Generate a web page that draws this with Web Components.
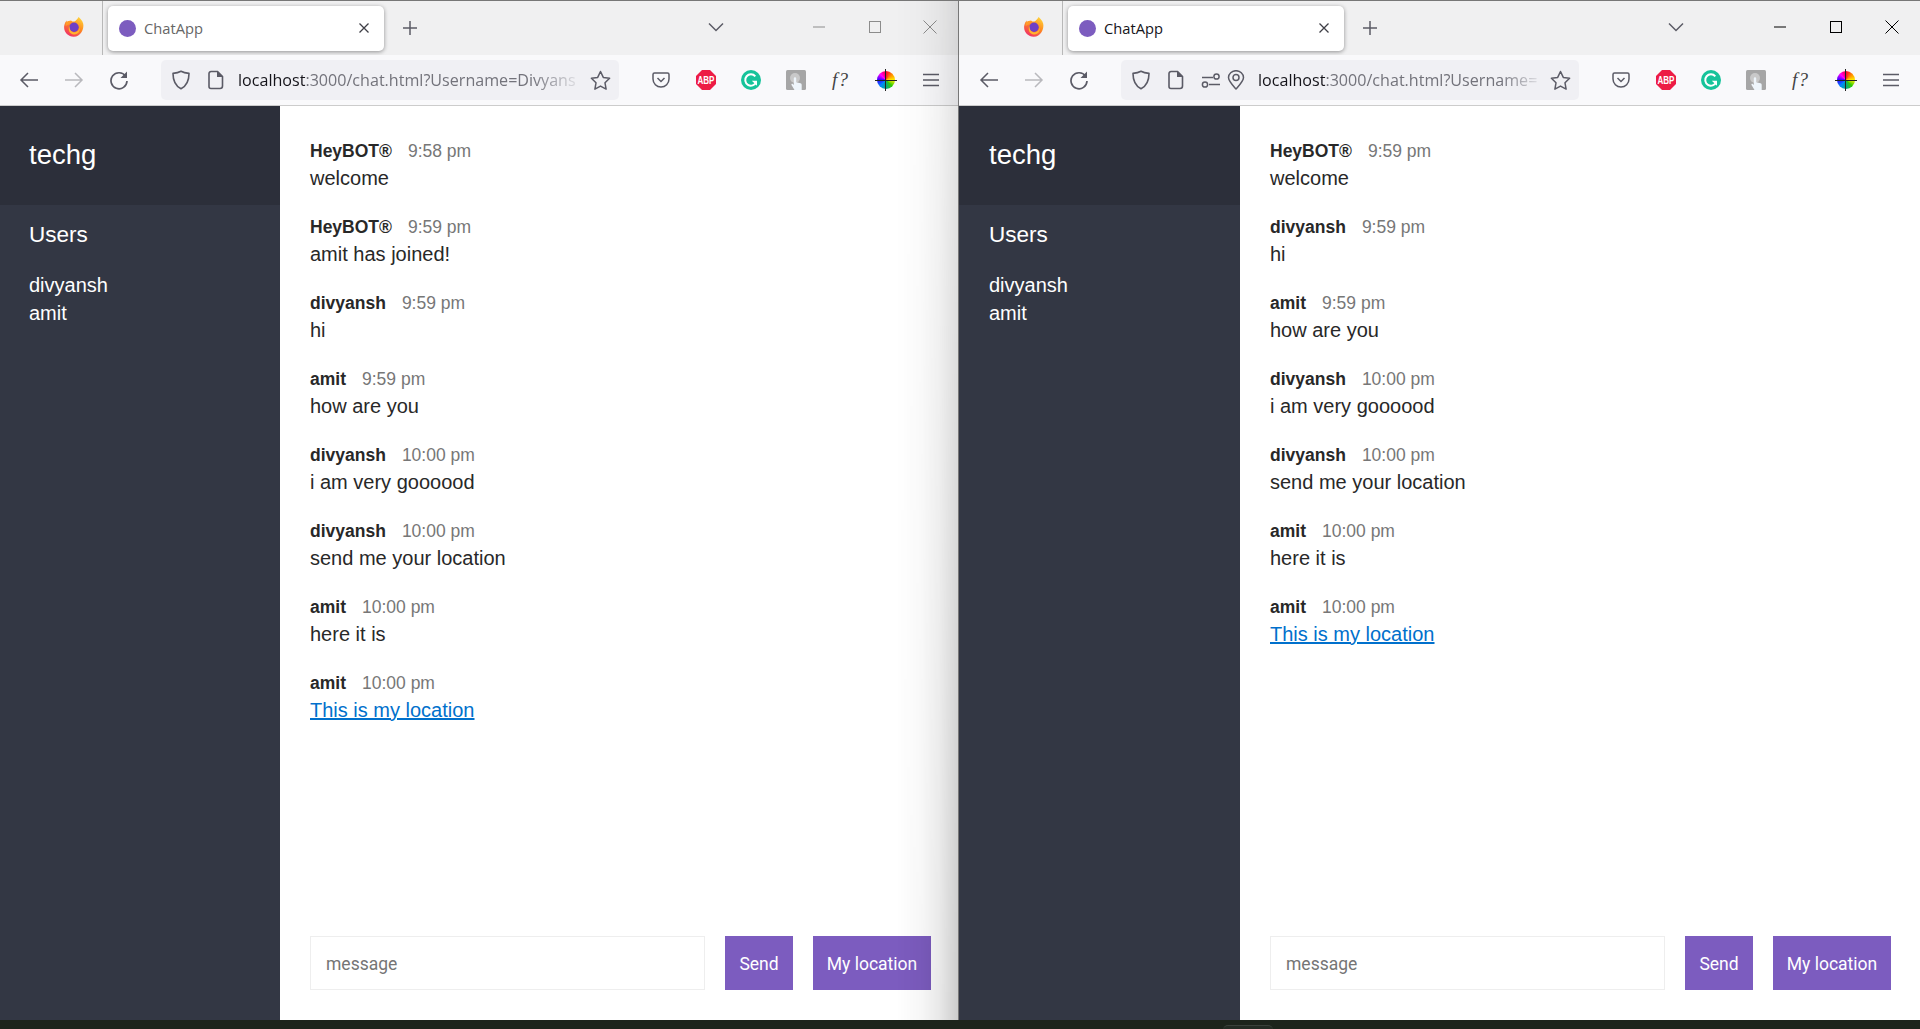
<!DOCTYPE html>
<html lang="en">
<head>
<meta charset="utf-8">
<title>ChatApp</title>
<style>
  html, body { margin: 0; padding: 0; height: 1029px; overflow: hidden; background: #1c241c; }
  body { font-family: "Liberation Sans", Arial, sans-serif; }
  .desktop { display: flex; height: 1020px; }
</style>
</head>
<body>
<div class="desktop">
  <browser-window shadowed host="localhost" rest=":3000/chat.html?Username=Divyans" style="--win-w: 959px; --edge: 0px; --main-right: 27px">
    <chat-room room="techg" users="divyansh,amit">
      <chat-message name="HeyBOT®" time="9:58 pm">welcome</chat-message>
      <chat-message name="HeyBOT®" time="9:59 pm">amit has joined!</chat-message>
      <chat-message name="divyansh" time="9:59 pm">hi</chat-message>
      <chat-message name="amit" time="9:59 pm">how are you</chat-message>
      <chat-message name="divyansh" time="10:00 pm">i am very goooood</chat-message>
      <chat-message name="divyansh" time="10:00 pm">send me your location</chat-message>
      <chat-message name="amit" time="10:00 pm">here it is</chat-message>
      <chat-message name="amit" time="10:00 pm"><a href="#">This is my location</a></chat-message>
    </chat-room>
  </browser-window>
  <browser-window active permissions host="localhost" rest=":3000/chat.html?Username=" style="--win-w: 961px; --edge: 1px; --main-right: 29px">
    <chat-room room="techg" users="divyansh,amit">
      <chat-message name="HeyBOT®" time="9:59 pm">welcome</chat-message>
      <chat-message name="divyansh" time="9:59 pm">hi</chat-message>
      <chat-message name="amit" time="9:59 pm">how are you</chat-message>
      <chat-message name="divyansh" time="10:00 pm">i am very goooood</chat-message>
      <chat-message name="divyansh" time="10:00 pm">send me your location</chat-message>
      <chat-message name="amit" time="10:00 pm">here it is</chat-message>
      <chat-message name="amit" time="10:00 pm"><a href="#">This is my location</a></chat-message>
    </chat-room>
  </browser-window>
</div>
<desktop-strip></desktop-strip>

<script>
// Toolbar icons, all on a 20x20 box
const ICONS = {
  firefox: `<svg width="22" height="22" viewBox="0 0 20 20">
    <defs>
      <linearGradient id="ff" x1="0.8" y1="0" x2="0.2" y2="1"><stop offset="0" stop-color="#ffd53a"/><stop offset=".45" stop-color="#ff8a1f"/><stop offset="1" stop-color="#f0286e"/></linearGradient>
    </defs>
    <path fill="url(#ff)" d="M14.2 0.8c.9 1.2 3.4 2.8 4.2 6.2.9 4.800-2.300 11.800-8.700 11.800C4.800 18.800 1 15.200 1 10.300c0-1.700.5-3.500 1.300-4.700.3-.6.8-1.300 1-1.500-.1.800.1 1.400.4 1.800C4.700 4.600 6 4 7.300 4c1.800 1.800 3.600 1 4.600-.2.800-1 1.800-2 2.300-3z"/>
    <path fill="#ff9c2a" d="M2.200 6.200C3 5 5.400 4.400 7.400 4.700L5.600 7.400 2.400 9z"/>
    <circle cx="10" cy="10.200" r="4.300" fill="#6e3fc6"/>
    <path fill="#ffb52e" d="M6 8.800c-.6 3.600 2 6.400 5.300 5.900 2.500-.4 3.900-2.500 3.700-5 1.200 3.300-1 7.200-5 7.100C6 16.600 4 12.200 6 8.800z"/>
  </svg>`,
  close: `<svg width="12" height="12" viewBox="0 0 12 12"><path d="M1.500 1.500l9 9M10.500 1.500l-9 9" stroke="#3f3f46" stroke-width="1.300" fill="none"/></svg>`,
  plus: `<svg width="16" height="16" viewBox="0 0 16 16"><path d="M8 1v14M1 8h14" stroke="#5b5b66" stroke-width="1.500" fill="none"/></svg>`,
  chevron: `<svg width="16" height="10" viewBox="0 0 16 10"><path d="M1 1.500l7 7 7-7" stroke="#5b5b66" stroke-width="1.500" fill="none"/></svg>`,
  back: `<svg width="20" height="20" viewBox="0 0 20 20"><path d="M19 10H2M9 3l-7 7 7 7" stroke="currentColor" stroke-width="1.500" fill="none"/></svg>`,
  forward: `<svg width="20" height="20" viewBox="0 0 20 20"><path d="M1 10h17M11 3l7 7-7 7" stroke="currentColor" stroke-width="1.500" fill="none"/></svg>`,
  reload: `<svg width="20" height="20" viewBox="0 0 20 20"><path d="M16.600 6.200A8 8 0 1 0 18 11" stroke="currentColor" stroke-width="1.700" fill="none"/><path d="M18 1.500V8h-6.500z" fill="currentColor"/></svg>`,
  shield: `<svg width="20" height="20" viewBox="0 0 20 20"><path d="M10 1.300c2.400 1.400 5 1.900 8 2.100 0 7.400-2.400 12.400-8 15.300C4.400 15.800 2 10.800 2 3.400c3-.2 5.600-.7 8-2.100z" stroke="currentColor" stroke-width="1.600" fill="none" stroke-linejoin="round"/></svg>`,
  page: `<svg width="16" height="20" viewBox="0 0 16 20"><path d="M3 1.500h6.500l5 5V16a2.500 2.500 0 0 1-2.500 2.500H3A2 2 0 0 1 1 16.500v-13a2 2 0 0 1 2-2z" stroke="currentColor" stroke-width="1.600" fill="none"/><path d="M9 1.500h1l4.500 4.500v1H9z" fill="currentColor"/></svg>`,
  perms: `<svg width="20" height="20" viewBox="0 0 20 20"><path d="M1 7.500h11M8 14.500h11" stroke="currentColor" stroke-width="1.500" fill="none"/><circle cx="15.500" cy="6.500" r="2.600" stroke="currentColor" stroke-width="1.500" fill="none"/><circle cx="4" cy="14.500" r="2.600" stroke="currentColor" stroke-width="1.500" fill="none"/></svg>`,
  pin: `<svg width="18" height="20" viewBox="0 0 18 20"><path d="M9 19C5 14.500 1.500 11 1.500 7.500a7.500 6.800 0 0 1 15 0C16.500 11 13 14.500 9 19z" stroke="currentColor" stroke-width="1.500" fill="none" stroke-linejoin="round"/><circle cx="9" cy="7.500" r="3" stroke="currentColor" stroke-width="1.500" fill="none"/></svg>`,
  star: `<svg width="21" height="20" viewBox="0 0 21 20"><path d="M10.500 1.500l2.800 5.900 6.300.9-4.600 4.500 1.100 6.300-5.600-3-5.600 3 1.100-6.300L1.400 8.300l6.300-.9z" stroke="currentColor" stroke-width="1.500" fill="none" stroke-linejoin="round"/></svg>`,
  pocket: `<svg width="18" height="16" viewBox="0 0 18 16"><path d="M2.500 1h13A1.500 1.500 0 0 1 17 2.500V7a8 8 0 0 1-16 0V2.500A1.500 1.500 0 0 1 2.500 1z" stroke="currentColor" stroke-width="1.500" fill="none"/><path d="M5.500 6l3.500 3.500L12.500 6" stroke="currentColor" stroke-width="1.500" fill="none"/></svg>`,
  abp: `<svg width="20" height="20" viewBox="0 0 20 20"><path d="M6 0h8l6 6v8l-6 6H6l-6-6V6z" fill="#ed1c45"/><text x="10" y="13.800" text-anchor="middle" font-family="Liberation Sans, sans-serif" font-weight="700" font-size="10" textLength="17" lengthAdjust="spacingAndGlyphs" fill="#fff">ABP</text></svg>`,
  grammarly: `<svg width="20" height="20" viewBox="0 0 20 20"><circle cx="10" cy="10" r="10" fill="#15c39a"/><path d="M14.300 6.300A5.700 5.700 0 1 0 15.200 12.200" stroke="#fff" stroke-width="2" fill="none"/><path d="M10.800 10.700h5.200v5z" fill="#fff"/></svg>`,
  touch: `<svg width="20" height="20" viewBox="0 0 20 20"><rect width="20" height="20" rx="1.500" fill="#a6a6a6"/><circle cx="9" cy="8" r="5" fill="#c9c9c9"/><path d="M7.800 8.500a1.200 1.200 0 0 1 2.400 0v3.800l4.300 1c.8.200 1.200.7 1.200 1.500V20H8.500l-3-5c-.5-.9.500-1.800 1.300-1.100l1 1z" fill="#eef5fb"/></svg>`,
  menu: `<svg width="16" height="14" viewBox="0 0 16 14"><path d="M0 1.500h16M0 7h16M0 12.500h16" stroke="#5b5b66" stroke-width="1.500" fill="none"/></svg>`
};

const WINDOW_BUTTONS = {
  min: `<svg width="12" height="12" viewBox="0 0 12 12"><path d="M0 6h12" stroke="currentColor" fill="none"/></svg>`,
  max: `<svg width="12" height="12" viewBox="0 0 12 12"><rect x=".5" y=".5" width="11" height="11" stroke="currentColor" fill="none"/></svg>`,
  close: `<svg width="14" height="14" viewBox="0 0 14 14"><path d="M.5.500l13 13M13.500.500l-13 13" stroke="currentColor" fill="none"/></svg>`
};

class BrowserWindow extends HTMLElement {
  constructor() {
    super();
    this.attachShadow({ mode: 'open' });
  }

  connectedCallback() {
    const perms = this.hasAttribute('permissions')
      ? `<span class="uicon perms">${ICONS.perms}</span><span class="uicon pin">${ICONS.pin}</span>` : '';

    this.shadowRoot.innerHTML = `
      <style>
        :host {
          display: flex;
          flex-direction: column;
          position: relative;
          width: var(--win-w);
          height: 1020px;
          box-sizing: border-box;
          flex: none;
          background: #fff;
          font-family: "Open Sans", "Liberation Sans", sans-serif;
        }
        :host([shadowed]) { border-right: 1px solid #777; }
        :host([shadowed])::after {
          content: "";
          position: absolute;
          top: 1px; right: 0; bottom: 0;
          width: 62px;
          pointer-events: none;
          background: linear-gradient(to right, rgba(0,0,0,0), rgba(0,0,0,.03) 40%, rgba(0,0,0,.09) 70%, rgba(0,0,0,.2));
          -webkit-mask-image: linear-gradient(to bottom, rgba(0,0,0,.5), #000);
          mask-image: linear-gradient(to bottom, rgba(0,0,0,.5), #000);
        }
        .tabs {
          display: flex;
          align-items: center;
          height: 54px;
          padding-left: var(--edge);
          background: #f0f0f1;
          border-top: 1px solid #777;
        }
        .ff { width: 103px; height: 54px; box-sizing: border-box; padding: 15px 0 0 63px; border-right: 1px solid #b8b8b8; flex: none; }
        .tab {
          display: flex;
          align-items: center;
          width: 276px;
          height: 45px;
          margin: 0 0 0 5px;
          padding: 0 14px 0 11px;
          box-sizing: border-box;
          background: #fff;
          border-radius: 5px;
          box-shadow: 0 1px 4px rgba(0,0,0,.4);
          flex: none;
        }
        .fav { width: 17px; height: 17px; border-radius: 50%; background: #7c5cbf; flex: none; margin-right: 8px; }
        .title { flex: 1; font-size: 14.700px; color: #666; }
        :host([active]) .title { color: #15141a; }
        .tab svg { display: block; }
        .plus { margin-left: 18px; width: 16px; display: flex; }
        .chev { margin-left: 290px; width: 16px; display: flex; margin-top: -3px; }
        .wc { width: 57px; display: flex; justify-content: center; color: #8c8c8c; margin-top: -3px; }
        :host([active]) .wc { color: #000; }
        .wc.first { margin-left: 67.500px; }
        .nav {
          display: flex;
          align-items: center;
          height: 50px;
          padding-left: calc(6.500px + var(--edge));
          background: #f9f9fb;
          border-bottom: 1px solid #ccc;
          color: #5b5b66;
        }
        .btn { width: 45px; display: flex; justify-content: center; align-items: center; flex: none; }
        .btn svg { display: block; }
        .btn.off { color: #b9b9bd; }
        .urlbar {
          display: flex;
          align-items: center;
          width: 458px;
          height: 40px;
          margin: 0 19px 0 19.500px;
          padding: 0 8px 0 10px;
          box-sizing: border-box;
          background: #f0f0f4;
          border-radius: 5px;
          flex: none;
        }
        .uicon { display: flex; flex: none; }
        .uicon.doc { margin-left: 17px; }
        .uicon.perms { margin-left: 17px; }
        .uicon.pin { margin-left: 6px; }
        .url {
          flex: 1;
          min-width: 0;
          margin: 0 6px 0 14px;
          font-size: 16.100px;
          white-space: nowrap;
          color: #15141a;
          -webkit-mask-image: linear-gradient(to right, #000 85%, transparent);
          mask-image: linear-gradient(to right, #000 85%, transparent);
        }
        :host([permissions]) .url { margin-left: 13px; }
        .url span { color: #73737b; }
        .fq { font: italic 19px "Liberation Serif", serif; color: #444; letter-spacing: 1px; }
        .wheel {
          width: 18px; height: 18px; border-radius: 50%; position: relative;
          background: conic-gradient(#f03 0, #f80 45deg, #fe0 90deg, #3c0 135deg, #0a8 180deg, #08f 225deg, #30f 270deg, #f0f 315deg, #f03 360deg);
        }
        .wheel::before { content: ""; position: absolute; left: -2px; right: -2px; top: 8.500px; height: 1px; background: #222; }
        .wheel::after { content: ""; position: absolute; top: -2px; bottom: -2px; left: 8.500px; width: 1px; background: #222; }
        .content { flex: 1; min-height: 0; display: flex; }
      </style>
      <div class="tabs">
        <div class="ff">${ICONS.firefox}</div>
        <div class="tab">
          <span class="fav"></span>
          <span class="title">ChatApp</span>
          ${ICONS.close}
        </div>
        <span class="plus">${ICONS.plus}</span>
        <span class="chev">${ICONS.chevron}</span>
        <span class="wc first">${WINDOW_BUTTONS.min}</span>
        <span class="wc">${WINDOW_BUTTONS.max}</span>
        <span class="wc">${WINDOW_BUTTONS.close}</span>
      </div>
      <div class="nav">
        <span class="btn">${ICONS.back}</span>
        <span class="btn off">${ICONS.forward}</span>
        <span class="btn">${ICONS.reload}</span>
        <div class="urlbar">
          <span class="uicon">${ICONS.shield}</span>
          <span class="uicon doc">${ICONS.page}</span>
          ${perms}
          <div class="url">${this.getAttribute('host')}<span>${this.getAttribute('rest')}</span></div>
          <span class="uicon">${ICONS.star}</span>
        </div>
        <span class="btn">${ICONS.pocket}</span>
        <span class="btn">${ICONS.abp}</span>
        <span class="btn">${ICONS.grammarly}</span>
        <span class="btn">${ICONS.touch}</span>
        <span class="btn fq">f?</span>
        <span class="btn"><span class="wheel"></span></span>
        <span class="btn">${ICONS.menu}</span>
      </div>
      <div class="content"><slot></slot></div>
    `;
  }
}

class ChatRoom extends HTMLElement {
  constructor() {
    super();
    this.attachShadow({ mode: 'open' });
  }

  connectedCallback() {
    const users = (this.getAttribute('users') || '').split(',');
    this.shadowRoot.innerHTML = `
      <style>
        :host {
          display: flex;
          flex: 1;
          min-width: 0;
          font-family: "Liberation Sans", Arial, sans-serif;
          font-size: 20px;
          line-height: 1.4;
          color: #333744;
        }
        .sidebar {
          width: calc(280px + var(--edge));
          flex: none;
          background: #333744;
          color: #fff;
        }
        .room { font-size: 27.500px; padding: 30px 30px 30px calc(29px + var(--edge)); background: #2c2f3a; }
        .list-title { font-size: 22.500px; padding: 14px 30px 0 calc(29px + var(--edge)); margin-bottom: 6px; }
        ul { list-style: none; margin: 0; padding: 15px 30px 0 calc(29px + var(--edge)); }
        .main { flex: 1; min-width: 0; display: flex; flex-direction: column; background: #fff; }
        .messages { flex: 1; min-height: 0; padding: 30px 30px 0; overflow: hidden; }
      </style>
      <div class="sidebar">
        <div class="room">${this.getAttribute('room')}</div>
        <div class="list-title">Users</div>
        <ul>${users.map(u => `<li>${u}</li>`).join('')}</ul>
      </div>
      <div class="main">
        <div class="messages"><slot></slot></div>
        <chat-compose></chat-compose>
      </div>
    `;
  }
}

class ChatMessage extends HTMLElement {
  constructor() {
    super();
    this.attachShadow({ mode: 'open' });
  }

  connectedCallback() {
    this.shadowRoot.innerHTML = `
      <style>
        :host { display: block; margin-bottom: 20px; color: #282828; }
        .name { font-weight: 700; font-size: 17.500px; margin-right: 16px; color: #282828; }
        .time { font-size: 17.500px; color: #777; }
        p { margin: 0; }
        ::slotted(a) { color: #0070cc; }
      </style>
      <div><span class="name">${this.getAttribute('name')}</span><span class="time">${this.getAttribute('time')}</span></div>
      <p><slot></slot></p>
    `;
  }
}

class ChatCompose extends HTMLElement {
  constructor() {
    super();
    this.attachShadow({ mode: 'open' });
  }

  connectedCallback() {
    this.shadowRoot.innerHTML = `
      <style>
        :host { display: flex; padding: 0 var(--main-right) 30px 30px; height: 54px; box-sizing: content-box; }
        input {
          flex: 1;
          min-width: 0;
          border: 1px solid #eee;
          padding: 1px 15px 0;
          margin: 0 20px 0 0;
          font: 17.500px Roboto, sans-serif;
          color: #333;
          outline: none;
        }
        input::placeholder { color: #757575; opacity: 1; }
        button {
          border: none;
          background: #7c5cbf;
          color: #fff;
          padding: 1px 0 0;
          margin: 0;
          width: 68px;
          font: 17.500px Roboto, sans-serif;
        }
        button + button { margin-left: 20px; width: 118px; }
      </style>
      <input type="text" placeholder="message">
      <button>Send</button>
      <button>My location</button>
    `;
  }
}

class DesktopStrip extends HTMLElement {
  constructor() {
    super();
    this.attachShadow({ mode: 'open' });
  }

  connectedCallback() {
    this.shadowRoot.innerHTML = `
      <style>
        :host { display: block; height: 9px; background: #1c241c; overflow: hidden; }
        div { width: 50px; height: 9px; margin: 5px 0 0 1223px; background: #232b24; border-radius: 5px 5px 0 0; border-top: 1px solid #3a413b; }
      </style>
      <div></div>
    `;
  }
}

customElements.define('browser-window', BrowserWindow);
customElements.define('chat-room', ChatRoom);
customElements.define('chat-message', ChatMessage);
customElements.define('chat-compose', ChatCompose);
customElements.define('desktop-strip', DesktopStrip);
</script>
</body>
</html>
